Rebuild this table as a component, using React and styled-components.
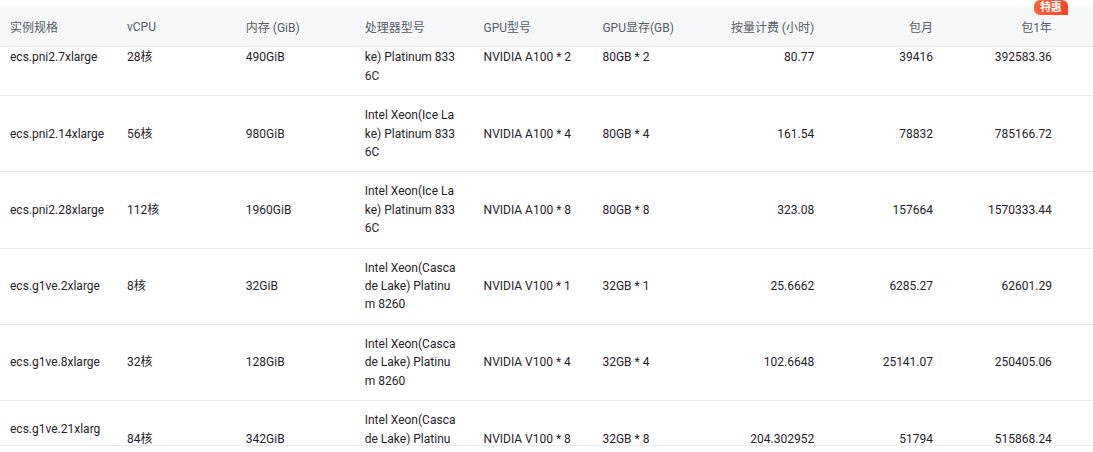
import React, { useLayoutEffect, useRef } from "react"
import styled, { createGlobalStyle } from "styled-components"

const GlobalStyle = createGlobalStyle`
	html, body {
		margin: 0;
		padding: 0;
		background: #ffffff;
	}
	body {
		font-family: Roboto, "Noto Sans CJK SC", sans-serif;
		font-size: 12px;
		color: #1f2329;
	}
`

const COLS = "117px repeat(8, 118.87px) 1fr"

const Page = styled.div`
	padding-top: 7px;
	width: 1093px;
	height: 452px;
	box-sizing: border-box;
	overflow: hidden;
`

const HeadRow = styled.div`
	display: grid;
	grid-template-columns: ${COLS};
	height: 39px;
	background: #f6f7f9;
	border-bottom: 1px solid #e9ebef;
`

const HeadCell = styled.div`
	position: relative;
	display: flex;
	align-items: center;
	justify-content: ${(p) => (p.$right ? "flex-end" : "flex-start")};
	padding: ${(p) => (p.$right ? "0 16px 0 10px" : "0 10px")};
	color: #575d66;
	white-space: nowrap;
`

const Badge = styled.span`
	position: absolute;
	top: -7px;
	right: 0;
	width: 34px;
	height: 15px;
	display: flex;
	align-items: center;
	justify-content: center;
	background: linear-gradient(90deg, #ff6236, #f2442b);
	border-radius: 6px 6px 0 6px;
	color: #ffffff;
	font-size: 11px;
	font-weight: 700;
	line-height: 1;
`

const Viewport = styled.div`
	height: 398px;
	overflow: hidden;
	border-bottom: 1px solid #e9ebef;
`

const Row = styled.div`
	display: grid;
	grid-template-columns: ${COLS};
	border-bottom: 1px solid #e9ebef;
`

const Cell = styled.div`
	display: flex;
	align-items: center;
	justify-content: ${(p) => (p.$right ? "flex-end" : "flex-start")};
	padding: ${(p) => (p.$right ? "10px 16px 10px 10px" : "10px")};
	line-height: 18.4px;
	min-height: 55.2px;
`

const Wrap = styled.span`
	display: block;
	width: ${(p) => p.$w}px;
	word-break: break-all;
`

const headers = ["实例规格", "vCPU", "内存 (GiB)", "处理器型号", "GPU型号", "GPU显存(GB)", "按量计费 (小时)", "包月", "包1年"]

const ICE = "Intel Xeon(Ice Lake) Platinum 8336C"
const CASCADE = "Intel Xeon(Cascade Lake) Platinum 8260"

const rows = [
	["ecs.pni2.7xlarge", "28核", "490GiB", ICE, "NVIDIA A100 * 2", "80GB * 2", "80.77", "39416", "392583.36"],
	["ecs.pni2.14xlarge", "56核", "980GiB", ICE, "NVIDIA A100 * 4", "80GB * 4", "161.54", "78832", "785166.72"],
	["ecs.pni2.28xlarge", "112核", "1960GiB", ICE, "NVIDIA A100 * 8", "80GB * 8", "323.08", "157664", "1570333.44"],
	["ecs.g1ve.2xlarge", "8核", "32GiB", CASCADE, "NVIDIA V100 * 1", "32GB * 1", "25.6662", "6285.27", "62601.29"],
	["ecs.g1ve.8xlarge", "32核", "128GiB", CASCADE, "NVIDIA V100 * 4", "32GB * 4", "102.6648", "25141.07", "250405.06"],
	["ecs.g1ve.21xlarge", "84核", "342GiB", CASCADE, "NVIDIA V100 * 8", "32GB * 8", "204.302952", "51794", "515868.24"],
]

const App = () => {
	const viewRef = useRef(null)
	useLayoutEffect(() => {
		if (viewRef.current) viewRef.current.scrollTop = 27
	}, [])

	return (
		<Page>
			<GlobalStyle />
			<HeadRow>
				{headers.map((h, i) => (
					<HeadCell key={h} $right={i >= 6}>
						{h}
						{i === 8 && <Badge>特惠</Badge>}
					</HeadCell>
				))}
				<HeadCell />
			</HeadRow>
			<Viewport ref={viewRef}>
				{rows.map((r) => (
					<Row key={r[0]}>
						<Cell>
							<Wrap $w={96}>{r[0]}</Wrap>
						</Cell>
						<Cell>{r[1]}</Cell>
						<Cell>{r[2]}</Cell>
						<Cell>
							<Wrap $w={92}>{r[3]}</Wrap>
						</Cell>
						<Cell>{r[4]}</Cell>
						<Cell>{r[5]}</Cell>
						<Cell $right>{r[6]}</Cell>
						<Cell $right>{r[7]}</Cell>
						<Cell $right>{r[8]}</Cell>
						<Cell />
					</Row>
				))}
			</Viewport>
		</Page>
	)
}

export default App
